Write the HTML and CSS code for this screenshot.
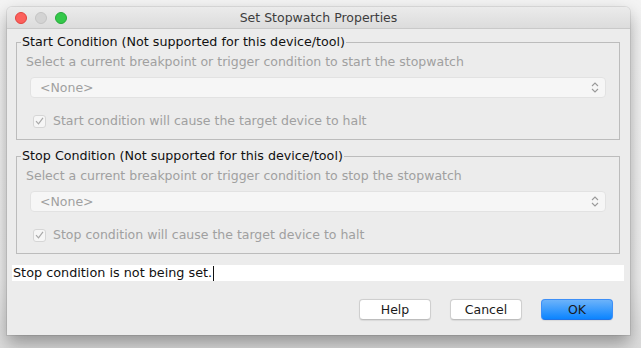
FILE: index.html
```html
<!DOCTYPE html>
<html>
<head>
<meta charset="utf-8">
<link rel="stylesheet" href="styles.css">
</head>
<body>
<div class="window">
  <div class="titlebar">
    <div class="lights">
      <span class="light red"></span>
      <span class="light gray"></span>
      <span class="light green"></span>
    </div>
    <div class="title">Set Stopwatch Properties</div>
  </div>
  <div class="content">
    <fieldset class="group">
      <legend>Start Condition (Not supported for this device/tool)</legend>
      <div class="hint">Select a current breakpoint or trigger condition to start the stopwatch</div>
      <div class="combo"><span>&lt;None&gt;</span>
        <svg class="arrows" width="8" height="13" viewBox="0 0 8 13"><path d="M1 5 L4 2 L7 5 M1 8 L4 11 L7 8" fill="none" stroke="#9a9a9a" stroke-width="1.1"/></svg>
      </div>
      <label class="check"><span class="box"><svg width="9" height="8" viewBox="0 0 9 8"><path d="M1 4.2 L3.5 6.8 L8 0.8" fill="none" stroke="#a8a8a8" stroke-width="1.2"/></svg></span>Start condition will cause the target device to halt</label>
    </fieldset>
    <fieldset class="group second">
      <legend>Stop Condition (Not supported for this device/tool)</legend>
      <div class="hint">Select a current breakpoint or trigger condition to stop the stopwatch</div>
      <div class="combo"><span>&lt;None&gt;</span>
        <svg class="arrows" width="8" height="13" viewBox="0 0 8 13"><path d="M1 5 L4 2 L7 5 M1 8 L4 11 L7 8" fill="none" stroke="#9a9a9a" stroke-width="1.1"/></svg>
      </div>
      <label class="check"><span class="box"><svg width="9" height="8" viewBox="0 0 9 8"><path d="M1 4.2 L3.5 6.8 L8 0.8" fill="none" stroke="#a8a8a8" stroke-width="1.2"/></svg></span>Stop condition will cause the target device to halt</label>
    </fieldset>
    <div class="status">Stop condition is not being set.<span class="caret"></span></div>
    <div class="buttons">
      <button class="btn">Help</button>
      <button class="btn">Cancel</button>
      <button class="btn primary">OK</button>
    </div>
  </div>
</div>
</body>
</html>
```
FILE: styles.css
```css
html, body {
  margin: 0;
  padding: 0;
}
body {
  width: 641px;
  height: 348px;
  overflow: hidden;
  background: linear-gradient(#f4f4f4 0%, #efefef 80%, #dcdcdc 100%);
  font-family: "DejaVu Sans", "Liberation Sans", sans-serif;
  font-size: 12.5px;
  padding: 7px 0 0 7px;
  box-sizing: border-box;
}
.window {
  width: 623px;
  height: 328px;
  background: #ececec;
  border-radius: 5px 5px 0 0;
  box-shadow: 0 0 0 1px rgba(0,0,0,0.08), 0 8px 18px rgba(0,0,0,0.35);
  display: flex;
  flex-direction: column;
  overflow: hidden;
}
.titlebar {
  height: 22px;
  background: linear-gradient(#ebebeb, #dcdcdc);
  border-bottom: 1px solid #c9c9c9;
  display: flex;
  align-items: center;
  position: relative;
  flex: none;
  box-sizing: border-box;
}
.lights {
  display: flex;
  gap: 8px;
  padding-left: 8px;
}
.light {
  width: 12px;
  height: 12px;
  border-radius: 50%;
  box-sizing: border-box;
}
.red { background: #fc605c; border: 0.5px solid #e0443e; }
.gray { background: #d3d3d3; border: 0.5px solid #c4c4c4; }
.green { background: #34c84a; border: 0.5px solid #25a93a; }
.title {
  position: absolute;
  left: 0;
  right: 0;
  text-align: center;
  color: #3d3d3d;
  font-size: 12.5px;
  pointer-events: none;
}
.content {
  padding: 5px 10px 0 9px;
  display: flex;
  flex-direction: column;
}
.group {
  margin: 0;
  border: 1px solid #bcbcbc;
  padding: 4px 9px 10px 9px;
  min-width: 0;
}
.group.second {
  margin-top: 8px;
}
.group legend {
  padding: 0 1px;
  margin-left: -5px;
  line-height: 16px;
  font-size: 12.7px;
  color: #111;
}
.hint {
  line-height: 16px;
  color: #a0a0a0;
}
.combo {
  margin: 7px 4px 0 4px;
  height: 21px;
  box-sizing: border-box;
  background: #f6f6f6;
  border: 1px solid #e2e2e2;
  border-radius: 4px;
  display: flex;
  align-items: center;
  justify-content: space-between;
  padding: 0 6px 0 9px;
  color: #a0a0a0;
}
.check {
  margin-top: 15px;
  display: flex;
  align-items: center;
  line-height: 16px;
  color: #a0a0a0;
  padding-left: 7px;
}
.box {
  width: 13px;
  height: 13px;
  box-sizing: border-box;
  border: 1px solid #d6d6d6;
  border-radius: 3px;
  background: #f6f6f6;
  display: flex;
  align-items: center;
  justify-content: center;
  margin-right: 7px;
}
.status {
  margin: 11px -4px 0 -4px;
  height: 16px;
  line-height: 16px;
  background: #fff;
  color: #111;
  font-size: 12.8px;
  padding-left: 1px;
  display: flex;
  align-items: center;
}
.caret {
  display: inline-block;
  width: 1px;
  height: 15px;
  background: #111;
  margin-left: 1px;
}
.buttons {
  display: flex;
  justify-content: flex-end;
  gap: 19px;
  margin-top: 18px;
  padding-right: 7px;
}
.btn {
  width: 72px;
  height: 21px;
  box-sizing: border-box;
  font-family: inherit;
  font-size: 12.5px;
  color: #1a1a1a;
  background: #fff;
  border: 1px solid #cfcfcf;
  border-bottom-color: #bdbdbd;
  border-radius: 4px;
  padding: 0;
  box-shadow: 0 0.5px 1px rgba(0,0,0,0.08);
}
.btn.primary {
  background: linear-gradient(#6cb3fa, #0b84ff);
  border-color: #3d8ff7;
  border-bottom-color: #2174e6;
}
```
